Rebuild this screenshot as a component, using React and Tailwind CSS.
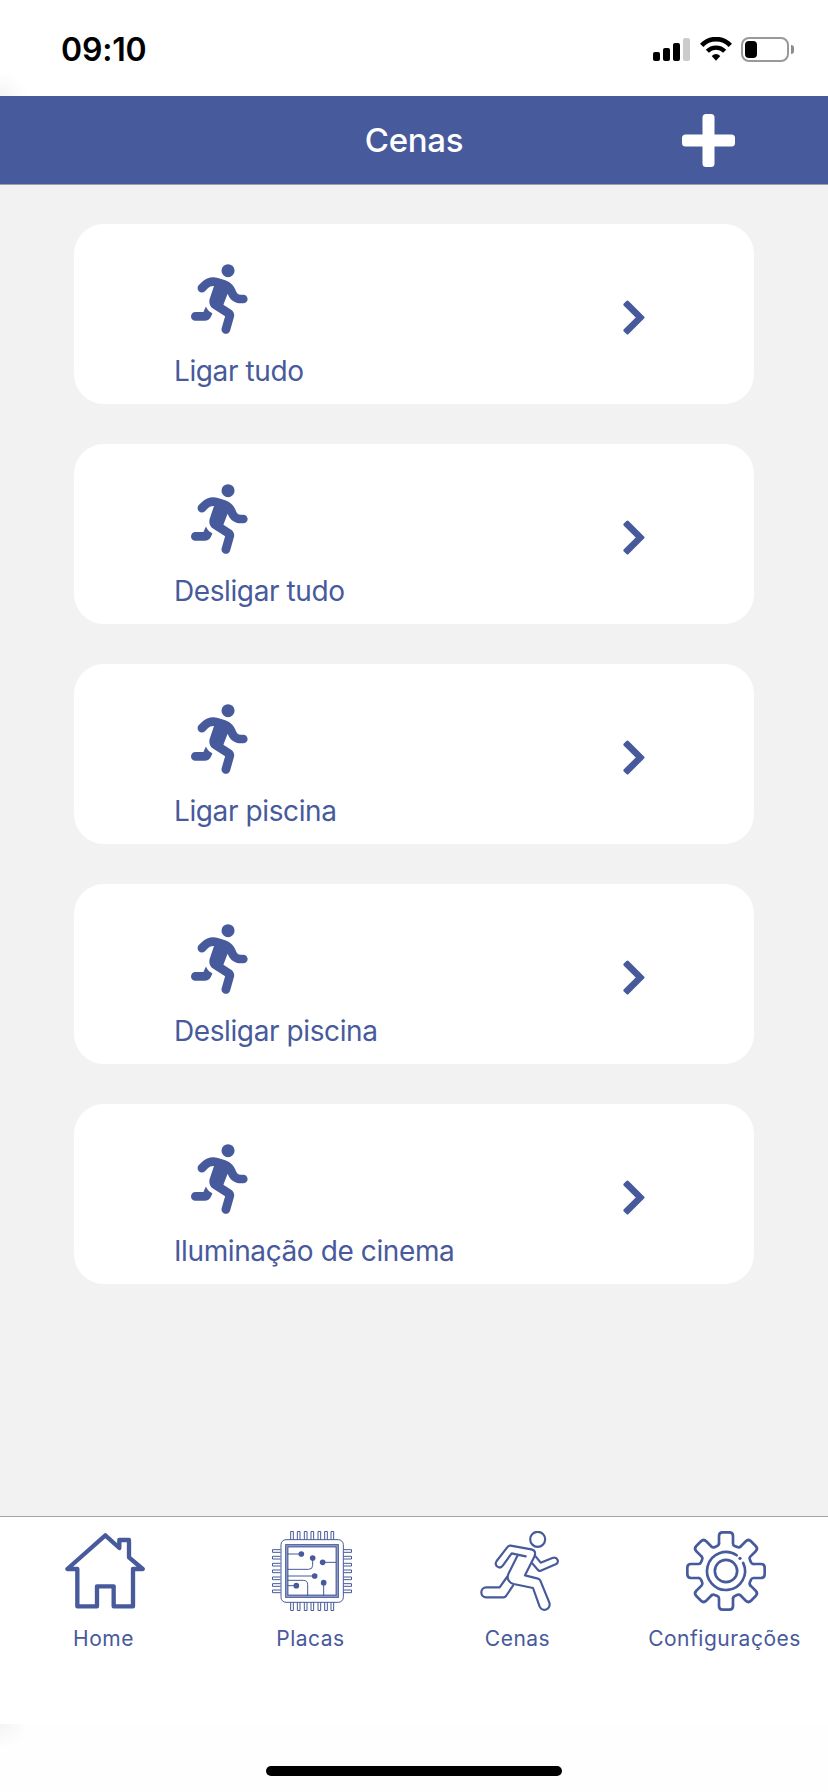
import { FaPersonRunning } from 'react-icons/fa6'

const scenes = ['Ligar tudo', 'Desligar tudo', 'Ligar piscina', 'Desligar piscina', 'Iluminação de cinema']

function StatusBar() {
  return (
    <div className="relative flex h-24 items-start justify-between bg-white pl-[61px] pr-[34px]">
      <div className="absolute bottom-0 left-0 h-6 w-7 bg-[radial-gradient(ellipse_at_bottom_left,#f4f4f4,#ffffff_70%)]" />
      <span className="mt-[30px] text-[32px] leading-10 font-semibold tracking-[-0.2px] text-black">09:10</span>
      <div className="mt-[37px] flex items-start">
        <div className="mt-px flex h-[23px] items-end gap-[3px]">
          <div className="h-[9px] w-[7px] rounded-[2px] bg-black" />
          <div className="h-[13px] w-[7px] rounded-[2px] bg-black" />
          <div className="h-[18px] w-[7px] rounded-[2px] bg-black" />
          <div className="h-[23px] w-[7px] rounded-[2px] bg-[#cccccc]" />
        </div>
        <svg className="ml-[9.5px] h-6 w-8" viewBox="0 0 96 72" fill="none" stroke="#000">
          <path d="M5 25A59 59 0 0 1 91 25" strokeWidth="14" />
          <path d="M22 43A36 36 0 0 1 74 43" strokeWidth="13" />
          <path d="M35 57Q48 45 61 57L48 71Z" fill="#000" stroke="none" />
        </svg>
        <div className="ml-[9.5px] h-[25px] w-12 rounded-[8px] border-2 border-[#999999] p-[2px]">
          <div className="h-[17px] w-3 rounded-[4px] bg-black" />
        </div>
        <div className="mt-2 ml-[2px] h-[9px] w-[3px] rounded-r-full bg-[#8c8c8c]" />
      </div>
    </div>
  )
}

function Header() {
  return (
    <div className="grid h-[89px] grid-cols-3 items-center border-b border-[#9d9fa6] bg-[#475a9b]">
      <div />
      <h1 className="text-center text-[33px] leading-10 font-medium tracking-[-0.3px] text-white">Cenas</h1>
      <button className="mr-[93px] justify-self-end">
        <svg className="h-[53px] w-[53px]" viewBox="0 0 53 53" fill="#fff">
          <rect x="20.5" width="12" height="53" rx="3.5" />
          <rect y="20.5" width="53" height="12" rx="3.5" />
        </svg>
      </button>
    </div>
  )
}

function SceneCard({ name }) {
  return (
    <div className="flex h-[180px] w-[680px] justify-between rounded-[30px] bg-white pr-[109px] pl-[100px]">
      <div>
        <FaPersonRunning className="mt-10 ml-[16.5px] h-[70px] w-[61px]" />
        <p className="mt-[19px] text-[28px] leading-9 tracking-[-0.4px] whitespace-nowrap">{name}</p>
      </div>
      <svg className="mt-[76px] h-[35px] w-[22px]" viewBox="0 0 22 35" fill="currentColor" stroke="currentColor" strokeWidth="3" strokeLinejoin="round">
        <path d="M1.9 4.6L4.5 2L20 17.5L4.5 33L1.9 30.4L14.8 17.5Z" />
      </svg>
    </div>
  )
}

function HomeIcon() {
  return (
    <svg className="h-20 w-20" viewBox="0 0 240 240" fill="none" stroke="currentColor" strokeWidth="13" strokeLinejoin="round">
      <path d="M7 114L121 13L163 51V27H192V79L233 114H204V226H146V166H96V226H37V114Z" />
    </svg>
  )
}

function ChipIcon() {
  const pins = [56, 76, 97, 117, 138, 158, 177]
  return (
    <svg className="h-20 w-20" viewBox="0 0 240 240" fill="none" stroke="currentColor" strokeWidth="3">
      {pins.map((p) => (
        <path key={p} d={`M${p} 26V1.5h8v24.5M${p} 214v24.5h8v-24.5M26 ${p}H1.5v8h24.5M214 ${p}h24.5v8h-24.5`} />
      ))}
      <rect x="27" y="26" width="187" height="188" rx="15" />
      <rect x="43.5" y="43.5" width="153" height="153" stroke="#9aa5cc" strokeWidth="7" />
      <rect x="41" y="41" width="158" height="158" />
      <rect x="47.5" y="47.5" width="145" height="145" strokeWidth="3.5" />
      <path d="M46 69h42M46 115h64q12 0 12-12V81M152 94h42M46 135h82M46 148h48q13 0 13 13v34M155 155v40M46 164h27" />
      <g fill="currentColor" stroke="none">
        <circle cx="88" cy="69" r="8.5" />
        <circle cx="122" cy="81" r="8.5" />
        <circle cx="152" cy="94" r="8.5" />
        <circle cx="128" cy="135" r="8.5" />
        <circle cx="155" cy="155" r="8.5" />
        <circle cx="73" cy="164" r="8.5" />
      </g>
    </svg>
  )
}

function RunnerIcon() {
  return (
    <svg className="h-20 w-20" viewBox="0 0 240 240" fill="none" stroke="currentColor" strokeWidth="6.5" strokeLinecap="round" strokeLinejoin="round">
      <circle cx="176" cy="25" r="22.5" />
      <path d="M140 76L98 67L72 103C62 117 44 104 53 90L84 50Q88 43 95 44L157 55Q170 58 168 70Q167 76 163 83L138 133L177 143Q182 144 184 149L211 215C217 235 190 245 182 227L162 171L104 159C88 155 82 141 89 127L116 73" />
      <path d="M168 74L185 95L220 81C236 76 242 94 230 100L185 119Q180 121 177 117L160 97" />
      <path d="M84 138L62 169H22C2 169 2 199 22 199H74Q78 199 81 195L102 164" />
    </svg>
  )
}

function GearIcon() {
  return (
    <svg className="h-20 w-20" viewBox="-120 -120 240 240" fill="none" stroke="currentColor" strokeWidth="8" strokeLinecap="round">
      {[0, 45, 90, 135, 180, 225, 270, 315].map((angle) => (
        <path key={angle} transform={`rotate(${angle})`} d="M-21 -82V-105Q-21 -116 -10 -116H10Q21 -116 21 -105V-82Q21 -77 26 -75L34 -71.7Q39 -69.5 43.1 -72.8" />
      ))}
      <circle r="33.5" />
      <path d="M51.5 -24.5A57 57 0 1 1 32 -47.2" />
      <circle cx="42" cy="-38" r="5" fill="currentColor" stroke="none" />
    </svg>
  )
}

const tabs = [
  { label: 'Home', icon: HomeIcon },
  { label: 'Placas', icon: ChipIcon },
  { label: 'Cenas', icon: RunnerIcon },
  { label: 'Configurações', icon: GearIcon },
]

function TabBar() {
  return (
    <nav className="grid h-[208px] grid-cols-4 border-t border-[#a3a3a3] bg-white">
      {tabs.map(({ label, icon: Icon }) => (
        <div key={label} className="flex flex-col items-center pt-[14px]">
          <div className="pl-[3px]">
            <Icon />
          </div>
          <span className="mt-3 text-[21px] leading-8 tracking-[0.5px]">{label}</span>
        </div>
      ))}
    </nav>
  )
}

export default function App() {
  return (
    <div className="flex h-[1792px] w-[828px] flex-col bg-[#f2f2f2] font-['Inter',sans-serif] text-[#475a9b]">
      <StatusBar />
      <Header />
      <main className="flex flex-1 flex-col items-center gap-10 pt-[39px]">
        {scenes.map((name) => (
          <SceneCard key={name} name={name} />
        ))}
      </main>
      <TabBar />
      <div className="relative flex h-[68px] justify-center bg-[#fefefe] pt-[42px]">
        <div className="absolute top-0 left-0 h-6 w-7 bg-[radial-gradient(ellipse_at_top_left,#f4f4f4,#fefefe_70%)]" />
        <div className="h-[10px] w-[296px] rounded-full bg-black" />
      </div>
    </div>
  )
}
